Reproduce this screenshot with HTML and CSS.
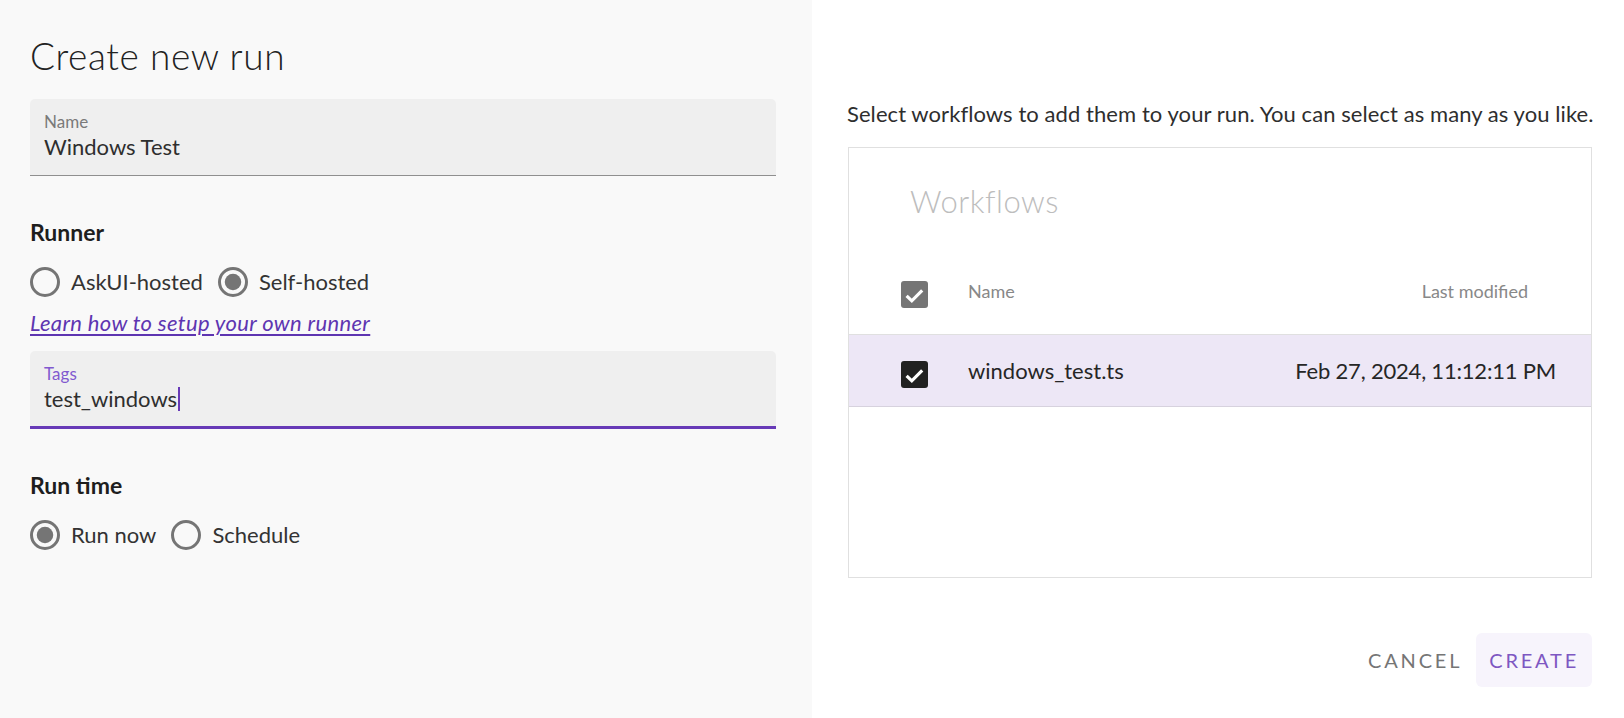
FILE: index.html
```html
<!DOCTYPE html>
<html lang="en">
<head>
<meta charset="utf-8">
<title>Create new run</title>
<link rel="stylesheet" href="styles.css">
</head>
<body>
<div class="dialog">
  <section class="left">
    <h1 class="title">Create new run</h1>
    <div class="field">
      <label class="field-label">Name</label>
      <div class="field-value">Windows Test</div>
    </div>

    <h2 class="section-title runner-title">Runner</h2>
    <div class="radio-group">
      <label class="radio">
        <svg class="radio-icon" viewBox="0 0 24 24"><circle cx="12" cy="12" r="9" fill="none" stroke="#757575" stroke-width="2"/></svg>
        <span>AskUI-hosted</span>
      </label>
      <label class="radio">
        <svg class="radio-icon" viewBox="0 0 24 24"><circle cx="12" cy="12" r="9" fill="none" stroke="#757575" stroke-width="2"/><circle cx="12" cy="12" r="5.5" fill="#757575"/></svg>
        <span>Self-hosted</span>
      </label>
    </div>
    <a class="link" href="#">Learn how to setup your own runner</a>

    <div class="field field-focused">
      <label class="field-label">Tags</label>
      <div class="field-value">test_windows<span class="caret"></span></div>
    </div>

    <h2 class="section-title">Run time</h2>
    <div class="radio-group">
      <label class="radio">
        <svg class="radio-icon" viewBox="0 0 24 24"><circle cx="12" cy="12" r="9" fill="none" stroke="#757575" stroke-width="2"/><circle cx="12" cy="12" r="5.5" fill="#757575"/></svg>
        <span>Run now</span>
      </label>
      <label class="radio">
        <svg class="radio-icon" viewBox="0 0 24 24"><circle cx="12" cy="12" r="9" fill="none" stroke="#757575" stroke-width="2"/></svg>
        <span>Schedule</span>
      </label>
    </div>
  </section>

  <section class="right">
    <p class="hint">Select workflows to add them to your run. You can select as many as you like.</p>
    <div class="table-card">
      <div class="toolbar">Workflows</div>
      <div class="row head-row">
        <div class="cell-check">
          <svg class="checkbox" viewBox="0 0 27 27"><rect x="0" y="0" width="27" height="27" rx="3" fill="#757575"/><path d="M5.6 14.8 L10.8 19.8 L21.2 9.4" fill="none" stroke="#fff" stroke-width="3.2"/></svg>
        </div>
        <div class="cell-name head-text">Name</div>
        <div class="cell-date head-text head-date">Last modified</div>
      </div>
      <div class="row data-row">
        <div class="cell-check">
          <svg class="checkbox checkbox-low" viewBox="0 0 27 27"><rect x="0" y="0" width="27" height="27" rx="3" fill="#212121"/><path d="M5.6 14.8 L10.8 19.8 L21.2 9.4" fill="none" stroke="#fff" stroke-width="3.2"/></svg>
        </div>
        <div class="cell-name">windows_test.ts</div>
        <div class="cell-date date-value">Feb 27, 2024, 11:12:11 PM</div>
      </div>
    </div>
    <div class="actions">
      <button class="btn btn-cancel" type="button">Cancel</button>
      <button class="btn btn-create" type="button">Create</button>
    </div>
  </section>
</div>
</body>
</html>
```

FILE: styles.css
```css
* { box-sizing: border-box; }

html, body {
  margin: 0;
  padding: 0;
  height: 100%;
}

body {
  font-family: "Lato", "Noto Sans", sans-serif;
  font-size: 22px;
  color: #2b2b2b;
  background: #ffffff;
}

.dialog {
  display: grid;
  grid-template-columns: 812px 812px;
  height: 718px;
  overflow: hidden;
}

/* ---------- left column ---------- */
.left {
  background: #f9f9f9;
  padding: 34px 36px 0 30px;
  display: flex;
  flex-direction: column;
}

.title {
  margin: 0;
  font-size: 37px;
  line-height: 44px;
  font-weight: 300;
  letter-spacing: 0.6px;
  color: #222222;
}

.field {
  margin-top: 21px;
  height: 77px;
  background: #efefef;
  border-radius: 5px 5px 0 0;
  border-bottom: 1px solid #8f8f8f;
  padding: 13px 15px 0 14px;
  display: flex;
  flex-direction: column;
  gap: 2px;
}

.field-label {
  font-size: 17px;
  line-height: 20px;
  color: #7a7a7a;
}

.field-value {
  font-size: 22px;
  line-height: 26px;
  color: #2e2e2e;
  display: flex;
  align-items: center;
}

.field-focused {
  margin-top: 15px;
  height: 78px;
  border-bottom: 3px solid #673ab7;
}

.field-focused .field-label {
  color: #8159cf;
}

.caret {
  display: inline-block;
  width: 2px;
  height: 24px;
  background: #673ab7;
  margin-left: 1px;
}

.section-title {
  margin: 42px 0 0;
  font-size: 23px;
  line-height: 28px;
  font-weight: 700;
  color: #1e1e1e;
}

.radio-group {
  display: flex;
  align-items: center;
  gap: 12px;
  margin-top: 18px;
  margin-left: -3px;
}

.radio {
  display: flex;
  align-items: center;
  gap: 8px;
  line-height: 36px;
  color: #333333;
}

.radio-icon {
  width: 36px;
  height: 36px;
  display: block;
}

.link {
  margin-top: 10px;
  align-self: flex-start;
  font-style: italic;
  font-size: 22px;
  line-height: 26px;
  color: #5e35b1;
  text-decoration: underline;
  text-underline-offset: 3px;
  letter-spacing: 0.35px;
}

/* ---------- right column ---------- */
.right {
  background: #ffffff;
  padding: 101px 32px 0 36px;
  display: flex;
  flex-direction: column;
}

.hint {
  margin: 0 0 0 -1px;
  font-size: 22px;
  line-height: 26px;
  letter-spacing: 0.07px;
  color: #2e2e2e;
  white-space: nowrap;
}

.table-card {
  margin-top: 20px;
  height: 431px;
  border: 1px solid #e0e0e0;
  display: flex;
  flex-direction: column;
}

.toolbar {
  padding: 35px 0 36px 61px;
  font-size: 31px;
  line-height: 36px;
  font-weight: 300;
  letter-spacing: 0.5px;
  color: #bdbdbd;
}

.row {
  display: flex;
  align-items: center;
  padding-right: 35px;
}

.head-row {
  height: 80px;
  border-bottom: 1px solid #e0e0e0;
}

.data-row {
  height: 72px;
  background: #ede7f6;
  border-bottom: 1px solid #d7d2de;
}

.cell-check {
  width: 119px;
  padding-left: 52px;
  display: flex;
  align-items: center;
}

.checkbox {
  width: 27px;
  height: 27px;
  display: block;
}

.checkbox-low {
  margin-top: 7px;
}

.cell-name {
  flex: 1;
  font-size: 22px;
  line-height: 26px;
  color: #262626;
}

.cell-date {
  text-align: right;
  font-size: 22px;
  line-height: 26px;
  color: #262626;
}

.date-value {
  letter-spacing: -0.2px;
}

.head-text {
  font-size: 18px;
  line-height: 22px;
  color: #888888;
  margin-bottom: 7px;
}

.head-date {
  margin-right: 28px;
}

.actions {
  margin-top: 55px;
  display: flex;
  justify-content: flex-end;
  gap: 1px;
}

.btn {
  height: 54px;
  padding: 0 13px 0 13px;
  border: none;
  border-radius: 6px;
  background: transparent;
  font-family: "Lato", "Noto Sans", sans-serif;
  font-size: 20px;
  line-height: 54px;
  letter-spacing: 2.8px;
  text-transform: uppercase;
  cursor: pointer;
}

.btn-cancel {
  color: #757575;
}

.btn-create {
  color: #7e57c2;
  background: #f7f4fc;
}
```
